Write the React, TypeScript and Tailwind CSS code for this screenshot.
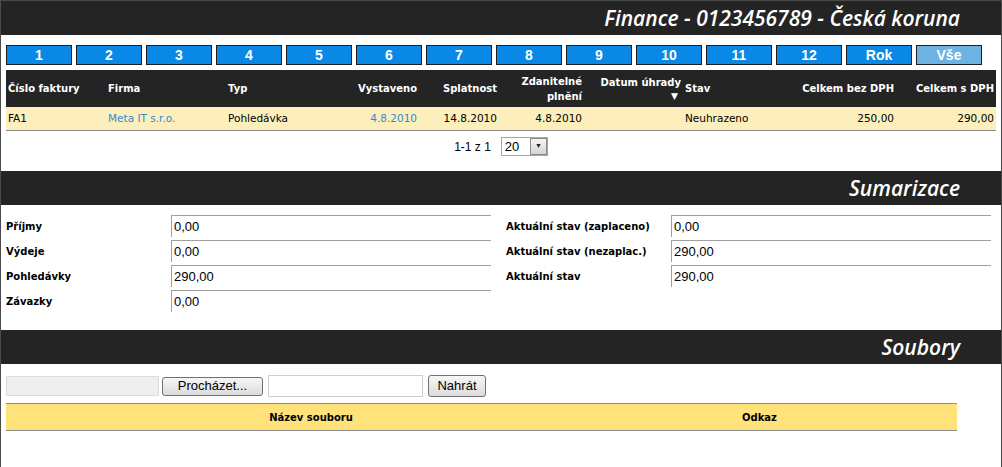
const months = ["1", "2", "3", "4", "5", "6", "7", "8", "9", "10", "11", "12", "Rok"];

const Band = ({ title, h }: { title: string; h: string }) => (
  <div className={`${h} bg-[#242424] flex items-center justify-end pr-[41px]`}>
    <span className="font-['Open_Sans',sans-serif] font-semibold italic text-[21px] text-white leading-none">{title}</span>
  </div>
);

const SumRow = ({ label, value }: { label: string; value: string }) => (
  <div className="flex items-center">
    <div className="w-[165px] font-bold text-[10px]">{label}</div>
    <div className="w-[320px] h-[22px] border-t border-l border-[#a0a0a0] flex items-center pl-[2px] font-['Liberation_Sans',sans-serif] text-[13px]">
      {value}
    </div>
  </div>
);

export default function App() {
  return (
    <div className="w-[1002px] h-[467px] overflow-hidden bg-white border-x border-t border-[#4a4a4a] font-['DejaVu_Sans',sans-serif] text-black">
      <Band title="Finance - 0123456789 - Česká koruna" h="h-[34px]" />

      {/* filtr mesicu */}
      <div className="mt-[10px] pl-[5px] flex gap-[4px]">
        {months.map((m) => (
          <div
            key={m}
            className="w-[66px] h-[20px] bg-[#0a88e6] border border-[#1e1e1e] flex items-center justify-center text-white font-bold text-[14px] font-['Liberation_Sans',sans-serif]"
          >
            {m}
          </div>
        ))}
        <div className="w-[66px] h-[20px] bg-[#6cb3e3] border border-[#1e1e1e] flex items-center justify-center text-white font-bold text-[14px] font-['Liberation_Sans',sans-serif]">
          Vše
        </div>
      </div>

      {/* faktury */}
      <div className="mt-[5px] ml-[5px] w-[990px]">
        <div className="h-[37px] bg-[#242424] text-white font-bold text-[10px] leading-[15px] flex items-center">
          <div className="w-[100px] px-[2px]">Číslo faktury</div>
          <div className="w-[120px] px-[2px]">Firma</div>
          <div className="w-[114px] px-[2px]">Typ</div>
          <div className="w-[79px] px-[2px] text-right">Vystaveno</div>
          <div className="w-[80px] px-[2px] text-right">Splatnost</div>
          <div className="w-[85px] px-[2px] text-right">Zdanitelné<br />plnění</div>
          <div className="w-[99px] px-[2px] text-right">
            Datum úhrady
            <div className="pr-[3px] text-[9px] leading-[13px]">▼</div>
          </div>
          <div className="w-[97px] px-[2px]">Stav</div>
          <div className="w-[116px] px-[2px] text-right">Celkem bez DPH</div>
          <div className="flex-1 px-[2px] text-right">Celkem s DPH</div>
        </div>
        <div className="h-[24px] bg-[#fdefbb] border-b border-[#8a8a8a] flex items-center text-[10.5px]">
          <div className="w-[100px] px-[2px]">FA1</div>
          <div className="w-[120px] px-[2px] text-[#2f8bd6]">Meta IT s.r.o.</div>
          <div className="w-[114px] px-[2px]">Pohledávka</div>
          <div className="w-[79px] px-[2px] text-right text-[#2f8bd6]">4.8.2010</div>
          <div className="w-[80px] px-[2px] text-right">14.8.2010</div>
          <div className="w-[85px] px-[2px] text-right">4.8.2010</div>
          <div className="w-[99px] px-[2px]"></div>
          <div className="w-[97px] px-[2px]">Neuhrazeno</div>
          <div className="w-[116px] px-[2px] text-right">250,00</div>
          <div className="flex-1 px-[2px] text-right">290,00</div>
        </div>
      </div>

      {/* strankovani */}
      <div className="h-[40px] pt-[6px] flex justify-center gap-[10px] font-['Liberation_Sans',sans-serif]">
        <div className="h-[19px] flex items-center text-[12px]">1-1 z 1</div>
        <div className="w-[47px] h-[19px] border border-[#a5a5a5] flex items-center">
          <span className="flex-1 pl-[3px] text-[13px]">20</span>
          <div className="w-[17px] h-[17px] bg-gradient-to-b from-[#f4f4f4] to-[#d6d6d6] border border-[#8a8a8a] flex items-center justify-center text-[7px] text-[#222]">
            ▼
          </div>
        </div>
      </div>

      <Band title="Sumarizace" h="h-[34px]" />

      <div className="h-[125px] pt-[10px] flex">
        <div className="ml-[5px] flex flex-col gap-[3px]">
          <SumRow label="Příjmy" value="0,00" />
          <SumRow label="Výdeje" value="0,00" />
          <SumRow label="Pohledávky" value="290,00" />
          <SumRow label="Závazky" value="0,00" />
        </div>
        <div className="ml-[15px] flex flex-col gap-[3px]">
          <SumRow label="Aktuální stav (zaplaceno)" value="0,00" />
          <SumRow label="Aktuální stav (nezaplac.)" value="290,00" />
          <SumRow label="Aktuální stav" value="290,00" />
        </div>
      </div>

      <Band title="Soubory" h="h-[34px]" />

      {/* upload */}
      <div className="mt-[11px] ml-[5px] h-[22px] flex items-center font-['Liberation_Sans',sans-serif] text-[13px]">
        <div className="w-[153px] h-[20px] bg-[#efefef] border border-[#dcdcdc]"></div>
        <div className="ml-[3px] w-[101px] h-[19px] rounded-[3px] border border-[#707070] bg-gradient-to-b from-[#f6f6f6] to-[#dcdcdc] flex items-center justify-center">
          Procházet...
        </div>
        <div className="ml-[5px] w-[155px] h-[22px] border border-[#c9ced8] bg-white"></div>
        <div className="ml-[5px] w-[58px] h-[22px] rounded-[3px] border border-[#707070] bg-gradient-to-b from-[#f6f6f6] to-[#dcdcdc] flex items-center justify-center">
          Nahrát
        </div>
      </div>

      <div className="mt-[6px] ml-[5px] w-[951px] h-[28px] bg-[#ffe27a] border-y border-[#8a8a8a] grid grid-cols-[556px_1fr] items-center font-bold text-[10px]">
        <div className="pl-[54px] text-center">Název souboru</div>
        <div className="text-center">Odkaz</div>
      </div>
    </div>
  );
}
